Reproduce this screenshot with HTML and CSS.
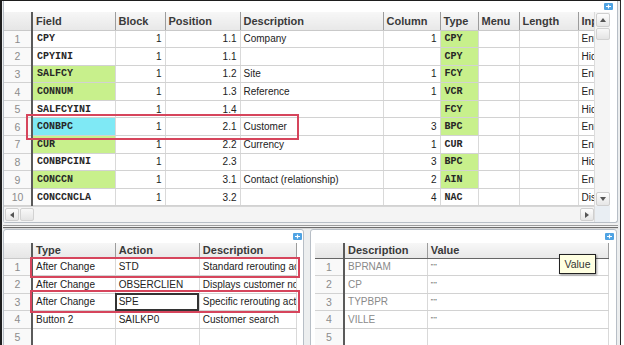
FILE: index.html
```html
<!DOCTYPE html>
<html lang="en">
<head>
    <meta charset="UTF-8">
    <title>Screen fields</title>
    <link rel="stylesheet" href="styles.css">
</head>
<body>
    <div class="frame">
        <section class="pane pane-top">
            <div class="pane-bar"><span class="pin"><svg width="9" height="7" viewBox="0 0 9 7"><rect width="9" height="7" rx="1" fill="#4fa3e3"/><path d="M2 3.5h5M4.5 1.5v4" stroke="#fff" stroke-width="1.2"/></svg></span></div>
            <div class="grid-wrap">
                <div class="grid-area">
                    <table class="grid grid-main">
                        <colgroup>
                            <col style="width:28px"><col style="width:83px"><col style="width:50px"><col style="width:75px"><col style="width:143px"><col style="width:57px"><col style="width:38px"><col style="width:41px"><col style="width:59px"><col style="width:16px">
                        </colgroup>
                        <thead>
                            <tr><th class="num"></th><th>Field</th><th>Block</th><th>Position</th><th>Description</th><th>Column</th><th>Type</th><th>Menu</th><th>Length</th><th>Input</th></tr>
                        </thead>
                        <tbody>
                            <tr><td class="num">1</td><td class="code">CPY</td><td class="r">1</td><td class="r">1.1</td><td>Company</td><td class="r">1</td><td class="code green">CPY</td><td></td><td></td><td>Entered</td></tr>
                            <tr><td class="num">2</td><td class="code">CPYINI</td><td class="r">1</td><td class="r">1.1</td><td></td><td class="r"></td><td class="code green">CPY</td><td></td><td></td><td>Hidden</td></tr>
                            <tr><td class="num">3</td><td class="code green">SALFCY</td><td class="r">1</td><td class="r">1.2</td><td>Site</td><td class="r">1</td><td class="code green">FCY</td><td></td><td></td><td>Entered</td></tr>
                            <tr><td class="num">4</td><td class="code green">CONNUM</td><td class="r">1</td><td class="r">1.3</td><td>Reference</td><td class="r">1</td><td class="code green">VCR</td><td></td><td></td><td>Entered</td></tr>
                            <tr><td class="num">5</td><td class="code">SALFCYINI</td><td class="r">1</td><td class="r">1.4</td><td></td><td class="r"></td><td class="code green">FCY</td><td></td><td></td><td>Hidden</td></tr>
                            <tr><td class="num">6</td><td class="code cyan">CONBPC</td><td class="r">1</td><td class="r">2.1</td><td>Customer</td><td class="r">3</td><td class="code green">BPC</td><td></td><td></td><td>Entered</td></tr>
                            <tr><td class="num">7</td><td class="code green">CUR</td><td class="r">1</td><td class="r">2.2</td><td>Currency</td><td class="r">1</td><td class="code">CUR</td><td></td><td></td><td>Entered</td></tr>
                            <tr><td class="num">8</td><td class="code">CONBPCINI</td><td class="r">1</td><td class="r">2.3</td><td></td><td class="r">3</td><td class="code green">BPC</td><td></td><td></td><td>Hidden</td></tr>
                            <tr><td class="num">9</td><td class="code green">CONCCN</td><td class="r">1</td><td class="r">3.1</td><td>Contact (relationship)</td><td class="r">2</td><td class="code green">AIN</td><td></td><td></td><td>Entered</td></tr>
                            <tr><td class="num">10</td><td class="code">CONCCNCLA</td><td class="r">1</td><td class="r">3.2</td><td></td><td class="r">4</td><td class="code">NAC</td><td></td><td></td><td>Displayed</td></tr>
                        </tbody>
                    </table>
                    <div class="hscroll">
                        <span class="sb-btn"><svg width="4" height="6" viewBox="0 0 4 6"><path d="M4 0v6L0 3z" fill="#555"/></svg></span>
                        <span class="sb-thumb h"></span>
                        <span class="sb-fill"></span>
                        <span class="sb-btn"><svg width="4" height="6" viewBox="0 0 4 6"><path d="M0 0v6l4-3z" fill="#555"/></svg></span>
                    </div>
                </div>
                <div class="vscroll">
                    <span class="sb-btn"><svg width="6" height="4" viewBox="0 0 6 4"><path d="M0 4h6L3 0z" fill="#555"/></svg></span>
                    <span class="sb-thumb v"></span>
                    <span class="sb-fill"></span>
                    <span class="sb-btn"><svg width="6" height="4" viewBox="0 0 6 4"><path d="M0 0h6L3 4z" fill="#555"/></svg></span>
                    <span class="sb-corner"></span>
                </div>
            </div>
        </section>

        <div class="splitter"></div>

        <div class="bottom">
            <section class="pane pane-left">
                <div class="pane-bar"><span class="pin"><svg width="9" height="7" viewBox="0 0 9 7"><rect width="9" height="7" rx="1" fill="#4fa3e3"/><path d="M2 3.5h5M4.5 1.5v4" stroke="#fff" stroke-width="1.2"/></svg></span></div>
                <table class="grid grid-small grid-actions">
                    <colgroup>
                        <col style="width:28px"><col style="width:83px"><col style="width:84px"><col style="width:97px">
                    </colgroup>
                    <thead>
                        <tr><th class="num"></th><th>Type</th><th>Action</th><th>Description</th></tr>
                    </thead>
                    <tbody>
                        <tr><td class="num">1</td><td>After Change</td><td>STD</td><td>Standard rerouting action</td></tr>
                        <tr><td class="num">2</td><td>After Change</td><td>OBSERCLIEN</td><td>Displays customer notes</td></tr>
                        <tr><td class="num">3</td><td>After Change</td><td class="focus">SPE</td><td>Specific rerouting action</td></tr>
                        <tr><td class="num">4</td><td>Button 2</td><td>SAILKP0</td><td>Customer search</td></tr>
                        <tr><td class="num">5</td><td></td><td></td><td></td></tr>
                    </tbody>
                </table>
            </section>
            <section class="pane pane-right">
                <div class="pane-bar"><span class="pin"><svg width="9" height="7" viewBox="0 0 9 7"><rect width="9" height="7" rx="1" fill="#4fa3e3"/><path d="M2 3.5h5M4.5 1.5v4" stroke="#fff" stroke-width="1.2"/></svg></span></div>
                <table class="grid grid-small grid-params">
                    <colgroup>
                        <col style="width:29px"><col style="width:83px"><col style="width:181px">
                    </colgroup>
                    <thead>
                        <tr><th class="num"></th><th>Description</th><th>Value</th></tr>
                    </thead>
                    <tbody>
                        <tr><td class="num">1</td><td class="muted">BPRNAM</td><td class="quote">""</td></tr>
                        <tr><td class="num">2</td><td class="muted">CP</td><td class="quote">""</td></tr>
                        <tr><td class="num">3</td><td class="muted">TYPBPR</td><td class="quote">""</td></tr>
                        <tr><td class="num">4</td><td class="muted">VILLE</td><td class="quote">""</td></tr>
                        <tr><td class="num">5</td><td></td><td></td></tr>
                    </tbody>
                </table>
            </section>
        </div>

        <div class="mark mark-field"></div>
        <div class="mark mark-std"></div>
        <div class="mark mark-spe"></div>
        <div class="tooltip">Value</div>
    </div>
</body>
</html>
```

FILE: styles.css
```css
html, body {
    margin: 0;
    padding: 0;
    background: #fff;
    overflow: hidden;
}
body {
    font-family: 'Liberation Sans', Arial, sans-serif;
    font-size: 10px;
    color: #222;
}
.frame {
    position: relative;
    width: 621px;
    height: 345px;
    box-sizing: border-box;
    border-left: 2px solid #1e1e1e;
    border-top: 1px solid #1e1e1e;
    border-right: 1px solid #2a2a2a;
    padding: 0 2px 0 1px;
    background: #eceeef;
    overflow: hidden;
}
.pane {
    background: #fff;
    border: 1px solid #b7bec6;
    border-radius: 3px;
    box-sizing: border-box;
}
.pane-top {
    height: 222px;
    border-top: none;
    border-radius: 0 0 3px 3px;
}
.pane-bar {
    height: 11px;
    display: flex;
    justify-content: flex-end;
    align-items: flex-start;
}
.pane-top .pane-bar {
    padding-right: 4px;
}
.pane-top .pin {
    margin-top: 2px;
}
.pin {
    display: block;
    width: 9px;
    height: 7px;
    line-height: 0;
}
.pin svg {
    display: block;
}
.grid-wrap {
    display: flex;
}
.grid-area {
    width: 590px;
    display: flex;
    flex-direction: column;
}

/* grids */
.grid {
    border-collapse: collapse;
    table-layout: fixed;
}
.grid th, .grid td {
    padding: 0 3px;
    white-space: nowrap;
    overflow: hidden;
    text-overflow: clip;
    box-sizing: border-box;
}
.grid th {
    font-size: 11px;
    font-weight: bold;
    color: #3a3a3a;
    text-align: left;
    background: linear-gradient(#f7f7f7, #e8e8e8);
    border-right: 1px solid #9c9c9c;
    border-bottom: 1px solid #c9c9c9;
}
.grid td {
    border-right: 1px solid #d9d9d9;
    border-bottom: 1px solid #d2d2d2;
}
.grid .num {
    text-align: center;
    color: #8c8c8c;
    font-size: 10.5px;
    background: #f9f9f9;
    border-right: 2px solid #5a5a5a;
}
.grid th.num {
    background: linear-gradient(#f4f4f4, #e6e6e6);
}
.grid-main {
    width: 590px;
}
.grid-main thead tr {
    height: 18px;
}
.grid-main tbody tr {
    height: 17.6px;
}
.grid .r {
    text-align: right;
}
.grid .code {
    font-family: 'Liberation Mono', 'Courier New', monospace;
    font-weight: bold;
    font-size: 10px;
    color: #262626;
    padding-left: 4px;
}
.grid .green {
    background: #c8f08c;
}
.grid .cyan {
    background: #7fe9f5;
}

/* scrollbars */
.hscroll {
    height: 16px;
    display: flex;
    background: #f4f4f4;
    border-top: 1px solid #d6d6d6;
    box-sizing: border-box;
    padding: 1px 0;
}
.vscroll {
    width: 16px;
    display: flex;
    flex-direction: column;
    background: #f4f4f4;
    border-left: 1px solid #dcdcdc;
    box-sizing: border-box;
    padding: 0 1px;
}
.sb-btn {
    display: flex;
    align-items: center;
    justify-content: center;
    width: 14px;
    height: 14px;
    background: linear-gradient(#fdfdfd, #e6e6e6);
    border: 1px solid #cfcfcf;
    box-sizing: border-box;
    border-radius: 2px;
}
.sb-btn svg {
    display: block;
}
.hscroll .sb-btn {
    height: 13px;
}
.hscroll .sb-btn:first-child {
    margin-left: 1px;
}
.sb-thumb {
    background: linear-gradient(#f8f8f8, #e4e4e4);
    border: 1px solid #d2d2d2;
    box-sizing: border-box;
    border-radius: 2px;
}
.sb-thumb.h {
    width: 14px;
    height: 13px;
    margin-left: 1px;
}
.sb-thumb.v {
    width: 14px;
    height: 12px;
    margin-top: 1px;
}
.sb-fill {
    flex: 1;
}
.sb-corner {
    height: 16px;
    margin: 0 -1px;
    background: #e9eef3;
}
.vscroll .sb-btn:first-child {
    margin-top: 1px;
}

/* splitter */
.splitter {
    height: 6px;
    background: linear-gradient(#f1f1f1 0, #f1f1f1 2px, #9c9c9c 2px, #9c9c9c 3px, #f3f3f3 3px, #f3f3f3 4px, #6c6c6c 4px, #6c6c6c 5px, #d8d8d8 5px);
}

/* bottom panes */
.bottom {
    display: flex;
    gap: 6px;
    height: 120px;
}
.pane-left {
    width: 301px;
}
.pane-right {
    width: 307px;
    padding-left: 4px;
}
.bottom .pane-bar {
    height: 13px;
    align-items: center;
}
.pane-left .pane-bar {
    padding-right: 1px;
}
.pane-right .pane-bar {
    padding-right: 2px;
    margin-left: -4px;
}
.grid-small thead tr {
    height: 15px;
}
.grid-small tbody tr {
    height: 17.5px;
}
.grid-small td {
    font-size: 10px;
}
.grid-small td.num {
    font-size: 10.5px;
}
.grid-actions {
    width: 293px;
    border-right: 1px solid #555;
}
.grid-params {
    width: 294px;
    border-right: 1px solid #555;
}
.grid-params th {
    border-bottom: 1px solid #666;
}
.grid .muted {
    color: #8a8a8a;
}
.grid .quote {
    font-size: 8px;
    color: #555;
    letter-spacing: 0.5px;
}
.grid .focus {
    outline: 2px solid #333;
    outline-offset: -2px;
}

/* overlays */
.mark {
    position: absolute;
    border: 2px solid #d6455c;
    box-sizing: border-box;
}
.mark-field {
    left: 24px;
    top: 113px;
    width: 273px;
    height: 26px;
}
.mark-std {
    left: 28px;
    top: 256px;
    width: 270px;
    height: 21px;
}
.mark-spe {
    left: 28px;
    top: 289px;
    width: 270px;
    height: 23px;
}
.tooltip {
    position: absolute;
    left: 557px;
    top: 253px;
    width: 37px;
    height: 20px;
    box-sizing: border-box;
    background: #ffffe1;
    border: 1px solid #222;
    box-shadow: 1px 1px 2px rgba(0, 0, 0, 0.4);
    font-size: 10.5px;
    color: #333;
    line-height: 18px;
    text-align: center;
}
```
